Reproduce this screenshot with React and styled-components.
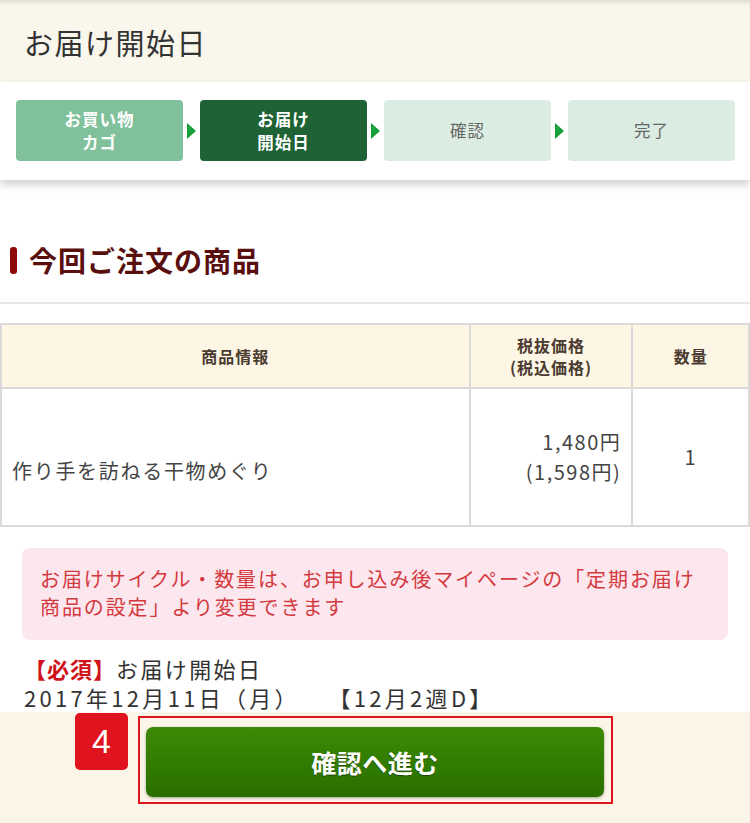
import React from "react";
import styled, { createGlobalStyle } from "styled-components";

const Global = createGlobalStyle`
  html, body { margin: 0; padding: 0; background: #fff; }
  body { font-family: "Noto Sans CJK JP", "Noto Sans", sans-serif; color: #333; }
  * { box-sizing: border-box; }
`;

const Page = styled.div`
  width: 750px;
  height: 823px;
  overflow: hidden;
  display: flex;
  flex-direction: column;
  background: #fff;
`;

const Header = styled.header`
  height: 82px;
  flex: none;
  background: #f9f6ec;
  box-shadow: inset 0 5px 5px -3px rgba(0, 0, 0, 0.12);
  display: flex;
  align-items: center;
  padding: 2px 0 0 24px;
`;

const Title = styled.h1`
  margin: 0;
  font-size: 29px;
  font-weight: 400;
  color: #333;
  letter-spacing: 1.5px;
`;

const Steps = styled.nav`
  flex: none;
  position: relative;
  z-index: 2;
  background: #fff;
  padding: 18px 15px 19px 16px;
  display: grid;
  grid-template-columns: repeat(4, 1fr);
  column-gap: 17px;
  box-shadow: 0 5px 8px rgba(0, 0, 0, 0.18);
`;

const Step = styled.div`
  position: relative;
  height: 61px;
  border-radius: 4px;
  display: flex;
  align-items: center;
  justify-content: center;
  text-align: center;
  font-size: 16.5px;
  line-height: 23px;
  letter-spacing: 1px;
  font-weight: ${(p) => (p.$state === "todo" ? 400 : 700)};
  background: ${(p) =>
    p.$state === "done" ? "#80c19b" : p.$state === "current" ? "#1e6235" : "#dbede2"};
  color: ${(p) => (p.$state === "todo" ? "#666" : "#fff")};
`;

const Arrow = styled.span`
  position: absolute;
  left: -13px;
  top: 50%;
  margin-top: -8px;
  width: 0;
  height: 0;
  border-top: 8px solid transparent;
  border-bottom: 8px solid transparent;
  border-left: 9px solid #16a03c;
`;

const Section = styled.section`
  flex: none;
  padding: 62px 0 24px 10px;
  border-bottom: 2px solid #e6e6e6;
`;

const Heading = styled.h2`
  margin: 0;
  display: flex;
  align-items: center;
  gap: 12px;
  font-size: 28px;
  line-height: 36px;
  font-weight: 700;
  letter-spacing: 1px;
  color: #5a0f0f;
  &::before {
    content: "";
    width: 7px;
    height: 27px;
    border-radius: 3px;
    background: #8e0a0a;
  }
`;

const Table = styled.table`
  margin-top: 19px;
  width: 750px;
  border-collapse: collapse;
  flex: none;
`;

const Th = styled.th`
  border: 2px solid #dadada;
  background: #fdf6e4;
  height: 64px;
  width: ${(p) => p.$w}px;
  font-size: 16px;
  line-height: 22px;
  letter-spacing: 1px;
  font-weight: 700;
  color: #4a3a30;
  padding: 0;
`;

const Td = styled.td`
  border: 2px solid #dadada;
  height: 138px;
  font-size: 20px;
  line-height: 30px;
  letter-spacing: ${(p) => p.$ls || "1px"};
  color: #444;
  padding: ${(p) => p.$pad || "0"};
  text-align: ${(p) => p.$align || "left"};
  vertical-align: middle;
`;

const Notice = styled.div`
  margin: 21px 22px 0;
  background: #fde7ee;
  border-radius: 8px;
  padding: 17px 18px 19px;
  font-size: 20px;
  line-height: 28px;
  color: #d33a3f;
  letter-spacing: 1.9px;
`;

const Required = styled.div`
  padding: 14px 0 0 24px;
  font-size: 22px;
  line-height: 29px;
  letter-spacing: 2.4px;
  color: #333;
  height: 72px;
  flex: none;
`;

const Mark = styled.span`
  color: #d0121b;
  font-weight: 700;
  letter-spacing: 1px;
`;

const DateLine = styled.span`
  letter-spacing: 3.3px;
`;

const Footer = styled.footer`
  flex: 1;
  background: #fbf5e8;
  display: flex;
  justify-content: center;
  padding: 4px 0 0 1px;
`;

const Highlight = styled.div`
  position: relative;
  width: 475px;
  height: 88px;
  border: 2px solid #e0141e;
  padding: 9px 7px 5px 6px;
`;

const Badge = styled.span`
  position: absolute;
  left: -65px;
  top: -5px;
  width: 53px;
  height: 57px;
  border-radius: 5px;
  background: #e0141e;
  color: #fff;
  font-family: "Liberation Sans", Arial, sans-serif;
  font-size: 34px;
  display: flex;
  align-items: center;
  justify-content: center;
`;

const NextButton = styled.button`
  width: 100%;
  height: 70px;
  border: none;
  border-radius: 7px;
  background: linear-gradient(#3e8a06, #2f7a00 60%, #2a6e00);
  box-shadow: 0 1px 3px rgba(0, 0, 0, 0.35);
  color: #fff;
  font-family: "Noto Sans CJK JP", sans-serif;
  font-size: 25px;
  font-weight: 700;
  text-shadow: 0 1px 1px rgba(0, 0, 0, 0.4);
  letter-spacing: 0.5px;
  cursor: pointer;
`;

const steps = [
  { label: ["お買い物", "カゴ"], state: "done" },
  { label: ["お届け", "開始日"], state: "current" },
  { label: ["確認"], state: "todo" },
  { label: ["完了"], state: "todo" },
];

export default function App() {
  return (
    <Page>
      <Global />
      <Header>
        <Title>お届け開始日</Title>
      </Header>
      <Steps>
        {steps.map((s, i) => (
          <Step key={i} $state={s.state}>
            {i > 0 && <Arrow />}
            <div>
              {s.label.map((l, j) => (
                <div key={j}>{l}</div>
              ))}
            </div>
          </Step>
        ))}
      </Steps>
      <Section>
        <Heading>今回ご注文の商品</Heading>
      </Section>
      <Table>
        <thead>
          <tr>
            <Th $w={470}>商品情報</Th>
            <Th $w={163}>
              税抜価格
              <br />
              (税込価格)
            </Th>
            <Th $w={117}>数量</Th>
          </tr>
        </thead>
        <tbody>
          <tr>
            <Td $pad="28px 0 0 10px" $ls="1.7px">作り手を訪ねる干物めぐり</Td>
            <Td $align="right" $pad="0 10px 0 0" $ls="1.5px">
              1,480円
              <br />
              (1,598円)
            </Td>
            <Td $align="center">1</Td>
          </tr>
        </tbody>
      </Table>
      <Notice>
        お届けサイクル・数量は、お申し込み後マイページの「定期お届け
        <br />
        商品の設定」より変更できます
      </Notice>
      <Required>
        <Mark>【必須】</Mark>お届け開始日
        <br />
        <DateLine>2017年12月11日（月）　　【12月2週D】</DateLine>
      </Required>
      <Footer>
        <Highlight>
          <Badge>4</Badge>
          <NextButton>確認へ進む</NextButton>
        </Highlight>
      </Footer>
    </Page>
  );
}
